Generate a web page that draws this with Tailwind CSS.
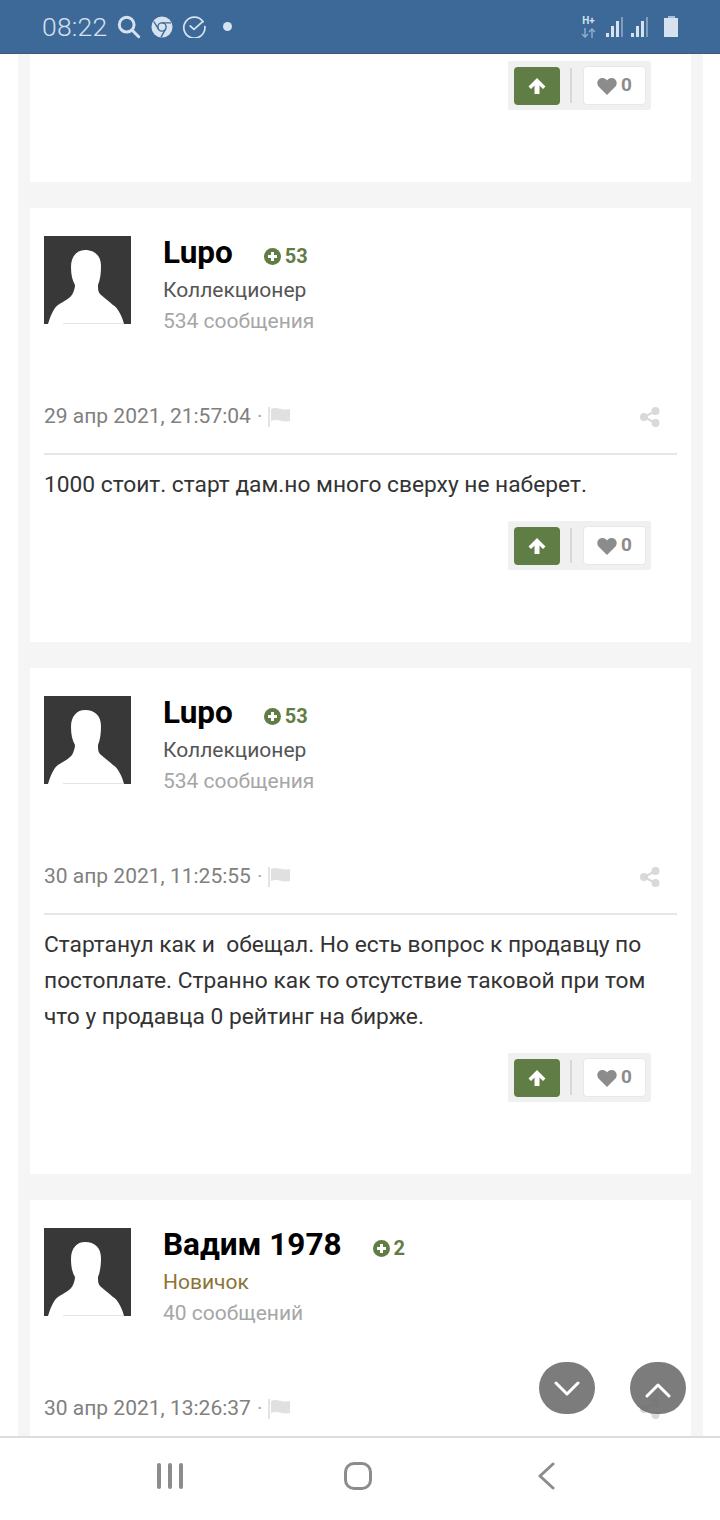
<!DOCTYPE html>
<html lang="en">
<head>
    <meta charset="UTF-8">
    <meta name="viewport" content="width=device-width, initial-scale=1.0">
    <title>Forum thread</title>
    <script src="https://cdn.jsdelivr.net/npm/@tailwindcss/browser@4"></script>
</head>
<body class="bg-white font-['Roboto',sans-serif]">
<div class="relative w-[720px] h-[1520px] overflow-hidden flex flex-col">

    <!-- status bar -->
    <div class="h-[54px] shrink-0 bg-[#3c6997] border-b border-[#3a5c80] flex items-center pl-[42px] pr-[42px] text-[#d6e2ef]">
        <span class="text-[26.500px] font-light tracking-[0.2px]">08:22</span>
        <svg class="ml-[10px] w-[24px] h-[24px]" viewBox="0 0 26 26" fill="none" stroke="#d6e2ef" stroke-width="3.200" stroke-linecap="round"><circle cx="10.500" cy="10.500" r="8"/><path d="M16.500 16.500l7 7"/></svg>
        <svg class="ml-[10px] w-[22px] h-[22px]" viewBox="0 0 24 24" fill="none"><circle cx="12" cy="12" r="11.500" fill="#d6e2ef"/><circle cx="12" cy="12" r="4.500" stroke="#3c6997" stroke-width="1.500"/><path d="M12 7.500h10M8 14L3 6M16 14l-5 9" stroke="#3c6997" stroke-width="1.500"/></svg>
        <svg class="ml-[10px] w-[23px] h-[23px]" viewBox="0 0 24 24" fill="none" stroke="#d6e2ef" stroke-width="1.800" stroke-linecap="round"><path d="M21 7a11 11 0 1 0 1.800 5"/><path d="M7.500 11.500l4 3.500 9-8"/></svg>
        <span class="ml-[17px] w-[9px] h-[9px] rounded-full bg-[#d6e2ef]"></span>
        <div class="ml-auto flex items-center">
            <div class="flex flex-col items-center leading-none w-[15px] mr-[10px]">
                <span class="text-[10px] font-bold text-[#d6e2ef]">H+</span>
                <svg class="w-[15px] h-[10px] mt-[2px]" viewBox="0 0 15 10" fill="none" stroke="#8fabc7" stroke-width="1.500"><path d="M4 0v9M1 6l3 3 3-3M11 10V1M8 4l3-3 3 3"/></svg>
            </div>
            <div class="flex items-end gap-[2px] h-[20px]">
                <span class="w-[3px] h-[4px] bg-[#d6e2ef]"></span><span class="w-[3px] h-[11px] bg-[#d6e2ef]"></span><span class="w-[3px] h-[16px] bg-[#d6e2ef]"></span><span class="w-[2px] h-[20px] bg-[#7f9dbc]"></span>
            </div>
            <div class="flex items-end gap-[2px] h-[20px] ml-[8px]">
                <span class="w-[3px] h-[4px] bg-[#d6e2ef]"></span><span class="w-[3px] h-[11px] bg-[#d6e2ef]"></span><span class="w-[3px] h-[16px] bg-[#d6e2ef]"></span><span class="w-[2px] h-[20px] bg-[#7f9dbc]"></span>
            </div>
            <div class="ml-[16px] flex flex-col items-center">
                <span class="w-[7px] h-[2px] bg-[#a9bfd6]"></span>
                <span class="w-[14px] h-[19px] bg-[#d6e2ef]"></span>
            </div>
        </div>
    </div>

    <!-- thread -->
    <div class="flex-1 min-h-0 overflow-hidden ml-[18px] w-[685px] bg-[#f5f5f5] px-[12px]">
        <div class="bg-white h-[128px] pt-[7px] px-[14px] mb-[26px]">
            <div class="flex justify-end pr-[26px]">
                <div class="w-[143px] h-[49px] bg-[#f0f0f0] rounded-[2px] flex items-center pl-[6px]">
                    <div class="w-[46px] h-[38px] bg-[#5f7d45] rounded-[4px] flex items-center justify-center">
                        <svg class="w-[18px] h-[18px]" viewBox="0 0 18 18" fill="#fff"><path d="M9 1l8.500 8.500L15 12l-3.500-3.500V17h-5V8.500L3 12 .5 9.500z"/></svg>
                    </div>
                    <span class="ml-[10px] w-[2px] h-[35px] bg-[#d8d8d8]"></span>
                    <div class="ml-[11px] w-[63px] h-[39px] bg-white border border-[#e8e8e8] rounded-[4px] flex items-center justify-center gap-[4px]">
                        <svg class="w-[20px] h-[18px]" viewBox="0 0 20 18" fill="#8c8c8c"><path d="M10 18L2 10C-1 7 0 1.500 5 1c2.500-.2 4 1 5 2.500C11 2 12.500.8 15 1c5 .5 6 6 3 9z"/></svg>
                        <span class="text-[19px] font-bold text-[#8c8c8c]">0</span>
                    </div>
                </div>
            </div>
        </div>

        <div class="bg-white h-[434px] px-[14px] pt-[28px] mb-[26px]">
            <div class="flex h-[88px]">
                <svg class="w-[87px] h-[88px] shrink-0" viewBox="0 0 87 88"><rect width="87" height="88" fill="#383838"/><path d="M4 88C7 78 10 72 14 69 20 65 27 62 29 57 30 54 31 52 31 49 28 44 27 38 27 31 27 20 33 14 41 14 51 14 57 20 57 30 57 38 56 44 54 49 54 53 54 56 56 58 60 62 65 65 69 69 74 72 78 80 80 88z" fill="#fff"/><path d="M19 87.500h60" stroke="#e4e4e4"/></svg>
                <div class="ml-[32px]">
                    <div class="flex items-center h-[36px] -mt-[1px]">
                        <span class="text-[31.500px] font-bold text-black leading-none">Lupo</span>
                        <svg class="ml-[31px] mt-[6px] w-[17px] h-[17px]" viewBox="0 0 17 17"><circle cx="8.500" cy="8.500" r="8.500" fill="#5f7d45"/><path d="M8.500 4v9M4 8.500h9" stroke="#fff" stroke-width="3"/></svg>
                        <span class="ml-[4px] mt-[6px] text-[20px] font-bold text-[#5f7d45]">53</span>
                    </div>
                    <div class="text-[21px] leading-[28px] mt-[5px] text-[#555555]">Коллекционер</div>
                    <div class="text-[21px] leading-[28px] mt-[3px] text-[#a6a6a6]">534 сообщения</div>
                </div>
            </div>
            <div class="flex items-center h-[34px] mt-[76px] text-[21px] text-[#808080]">
                <span>29 апр 2021, 21:57:04</span>
                <span class="ml-[6px] text-[#a6a6a6]">·</span>
                <svg class="ml-[6px] w-[23px] h-[20px]" viewBox="0 0 23 20"><path d="M1 0v20" stroke="#e3e3e3" stroke-width="2"/><path d="M3 2c6-3 10 2 19 0v12c-8 2-12-3-19 0z" fill="#e0e0e0"/></svg>
                <svg class="ml-auto mr-[17px] w-[20px] h-[20px]" viewBox="0 0 20 20" fill="#d9d9d9"><circle cx="15.500" cy="4" r="4"/><circle cx="4" cy="10" r="4"/><circle cx="15.500" cy="16" r="4"/><path d="M4 10l11.500-6M4 10l11.500 6" stroke="#d9d9d9" stroke-width="2"/></svg>
            </div>
            <div class="border-t-2 border-[#e6e6e6] mt-[19px] pt-[12px] text-[22.750px] leading-[36px] text-[#333333]">1000 стоит. старт дам.но много сверху не наберет.</div>
            <div class="flex justify-end pr-[26px] mt-[18px]">
                <div class="w-[143px] h-[49px] bg-[#f0f0f0] rounded-[2px] flex items-center pl-[6px]">
                    <div class="w-[46px] h-[38px] bg-[#5f7d45] rounded-[4px] flex items-center justify-center">
                        <svg class="w-[18px] h-[18px]" viewBox="0 0 18 18" fill="#fff"><path d="M9 1l8.500 8.500L15 12l-3.500-3.500V17h-5V8.500L3 12 .5 9.500z"/></svg>
                    </div>
                    <span class="ml-[10px] w-[2px] h-[35px] bg-[#d8d8d8]"></span>
                    <div class="ml-[11px] w-[63px] h-[39px] bg-white border border-[#e8e8e8] rounded-[4px] flex items-center justify-center gap-[4px]">
                        <svg class="w-[20px] h-[18px]" viewBox="0 0 20 18" fill="#8c8c8c"><path d="M10 18L2 10C-1 7 0 1.500 5 1c2.500-.2 4 1 5 2.500C11 2 12.500.8 15 1c5 .5 6 6 3 9z"/></svg>
                        <span class="text-[19px] font-bold text-[#8c8c8c]">0</span>
                    </div>
                </div>
            </div>
        </div>

        <div class="bg-white h-[506px] px-[14px] pt-[28px] mb-[26px]">
            <div class="flex h-[88px]">
                <svg class="w-[87px] h-[88px] shrink-0" viewBox="0 0 87 88"><rect width="87" height="88" fill="#383838"/><path d="M4 88C7 78 10 72 14 69 20 65 27 62 29 57 30 54 31 52 31 49 28 44 27 38 27 31 27 20 33 14 41 14 51 14 57 20 57 30 57 38 56 44 54 49 54 53 54 56 56 58 60 62 65 65 69 69 74 72 78 80 80 88z" fill="#fff"/><path d="M19 87.500h60" stroke="#e4e4e4"/></svg>
                <div class="ml-[32px]">
                    <div class="flex items-center h-[36px] -mt-[1px]">
                        <span class="text-[31.500px] font-bold text-black leading-none">Lupo</span>
                        <svg class="ml-[31px] mt-[6px] w-[17px] h-[17px]" viewBox="0 0 17 17"><circle cx="8.500" cy="8.500" r="8.500" fill="#5f7d45"/><path d="M8.500 4v9M4 8.500h9" stroke="#fff" stroke-width="3"/></svg>
                        <span class="ml-[4px] mt-[6px] text-[20px] font-bold text-[#5f7d45]">53</span>
                    </div>
                    <div class="text-[21px] leading-[28px] mt-[5px] text-[#555555]">Коллекционер</div>
                    <div class="text-[21px] leading-[28px] mt-[3px] text-[#a6a6a6]">534 сообщения</div>
                </div>
            </div>
            <div class="flex items-center h-[34px] mt-[76px] text-[21px] text-[#808080]">
                <span>30 апр 2021, 11:25:55</span>
                <span class="ml-[6px] text-[#a6a6a6]">·</span>
                <svg class="ml-[6px] w-[23px] h-[20px]" viewBox="0 0 23 20"><path d="M1 0v20" stroke="#e3e3e3" stroke-width="2"/><path d="M3 2c6-3 10 2 19 0v12c-8 2-12-3-19 0z" fill="#e0e0e0"/></svg>
                <svg class="ml-auto mr-[17px] w-[20px] h-[20px]" viewBox="0 0 20 20" fill="#d9d9d9"><circle cx="15.500" cy="4" r="4"/><circle cx="4" cy="10" r="4"/><circle cx="15.500" cy="16" r="4"/><path d="M4 10l11.500-6M4 10l11.500 6" stroke="#d9d9d9" stroke-width="2"/></svg>
            </div>
            <div class="border-t-2 border-[#e6e6e6] mt-[19px] pt-[12px] text-[22.750px] leading-[36px] text-[#333333]">Стартанул как и&nbsp; обещал. Но есть вопрос к продавцу по постоплате. Странно как то отсутствие таковой при том что у продавца 0 рейтинг на бирже.</div>
            <div class="flex justify-end pr-[26px] mt-[18px]">
                <div class="w-[143px] h-[49px] bg-[#f0f0f0] rounded-[2px] flex items-center pl-[6px]">
                    <div class="w-[46px] h-[38px] bg-[#5f7d45] rounded-[4px] flex items-center justify-center">
                        <svg class="w-[18px] h-[18px]" viewBox="0 0 18 18" fill="#fff"><path d="M9 1l8.500 8.500L15 12l-3.500-3.500V17h-5V8.500L3 12 .5 9.500z"/></svg>
                    </div>
                    <span class="ml-[10px] w-[2px] h-[35px] bg-[#d8d8d8]"></span>
                    <div class="ml-[11px] w-[63px] h-[39px] bg-white border border-[#e8e8e8] rounded-[4px] flex items-center justify-center gap-[4px]">
                        <svg class="w-[20px] h-[18px]" viewBox="0 0 20 18" fill="#8c8c8c"><path d="M10 18L2 10C-1 7 0 1.500 5 1c2.500-.2 4 1 5 2.500C11 2 12.500.8 15 1c5 .5 6 6 3 9z"/></svg>
                        <span class="text-[19px] font-bold text-[#8c8c8c]">0</span>
                    </div>
                </div>
            </div>
        </div>

        <div class="bg-white h-[400px] px-[14px] pt-[28px]">
            <div class="flex h-[88px]">
                <svg class="w-[87px] h-[88px] shrink-0" viewBox="0 0 87 88"><rect width="87" height="88" fill="#383838"/><path d="M4 88C7 78 10 72 14 69 20 65 27 62 29 57 30 54 31 52 31 49 28 44 27 38 27 31 27 20 33 14 41 14 51 14 57 20 57 30 57 38 56 44 54 49 54 53 54 56 56 58 60 62 65 65 69 69 74 72 78 80 80 88z" fill="#fff"/><path d="M19 87.500h60" stroke="#e4e4e4"/></svg>
                <div class="ml-[32px]">
                    <div class="flex items-center h-[36px] -mt-[1px]">
                        <span class="text-[31.500px] font-bold text-black leading-none">Вадим 1978</span>
                        <svg class="ml-[31px] mt-[6px] w-[17px] h-[17px]" viewBox="0 0 17 17"><circle cx="8.500" cy="8.500" r="8.500" fill="#5f7d45"/><path d="M8.500 4v9M4 8.500h9" stroke="#fff" stroke-width="3"/></svg>
                        <span class="ml-[4px] mt-[6px] text-[20px] font-bold text-[#5f7d45]">2</span>
                    </div>
                    <div class="text-[21px] leading-[28px] mt-[5px] text-[#8a7436]">Новичок</div>
                    <div class="text-[21px] leading-[28px] mt-[3px] text-[#a6a6a6]">40 сообщений</div>
                </div>
            </div>
            <div class="flex items-center h-[34px] mt-[76px] text-[21px] text-[#808080]">
                <span>30 апр 2021, 13:26:37</span>
                <span class="ml-[6px] text-[#a6a6a6]">·</span>
                <svg class="ml-[6px] w-[23px] h-[20px]" viewBox="0 0 23 20"><path d="M1 0v20" stroke="#e3e3e3" stroke-width="2"/><path d="M3 2c6-3 10 2 19 0v12c-8 2-12-3-19 0z" fill="#e0e0e0"/></svg>
                <svg class="ml-auto mr-[17px] w-[20px] h-[20px]" viewBox="0 0 20 20" fill="#d9d9d9"><circle cx="15.500" cy="4" r="4"/><circle cx="4" cy="10" r="4"/><circle cx="15.500" cy="16" r="4"/><path d="M4 10l11.500-6M4 10l11.500 6" stroke="#d9d9d9" stroke-width="2"/></svg>
            </div>
        </div>
    </div>

    <!-- scroll buttons -->
    <div class="absolute left-[539px] top-[1362px] w-[56px] h-[52px] rounded-full bg-[#6e6e6e]/90 flex items-center justify-center">
        <svg class="w-[26px] h-[15px]" viewBox="0 0 26 15" fill="none" stroke="#fff" stroke-width="3" stroke-linecap="round" stroke-linejoin="round"><path d="M2 2l11 11L24 2"/></svg>
    </div>
    <div class="absolute left-[630px] top-[1362px] w-[56px] h-[52px] rounded-full bg-[#6e6e6e]/90 flex items-center justify-center">
        <svg class="w-[26px] h-[15px] mt-[4px]" viewBox="0 0 26 15" fill="none" stroke="#fff" stroke-width="3" stroke-linecap="round" stroke-linejoin="round"><path d="M2 13L13 2l11 11"/></svg>
    </div>

    <!-- nav bar -->
    <div class="h-[84px] shrink-0 bg-white border-t-2 border-[#dddddd] flex items-center">
        <div class="flex items-center pl-[157px] -mt-[7px]">
            <div class="flex gap-[7px]">
                <span class="w-[4px] h-[26px] rounded-full bg-[#8c8c8c]"></span><span class="w-[4px] h-[26px] rounded-full bg-[#8c8c8c]"></span><span class="w-[4px] h-[26px] rounded-full bg-[#8c8c8c]"></span>
            </div>
            <span class="ml-[161px] w-[28px] h-[28px] rounded-[10px] border-[3px] border-[#8c8c8c]"></span>
            <svg class="ml-[165px] w-[18px] h-[28px]" viewBox="0 0 18 28" fill="none" stroke="#8c8c8c" stroke-width="3" stroke-linecap="round" stroke-linejoin="round"><path d="M16 2L3 14l13 12"/></svg>
        </div>
    </div>
</div>
</body>
</html>
